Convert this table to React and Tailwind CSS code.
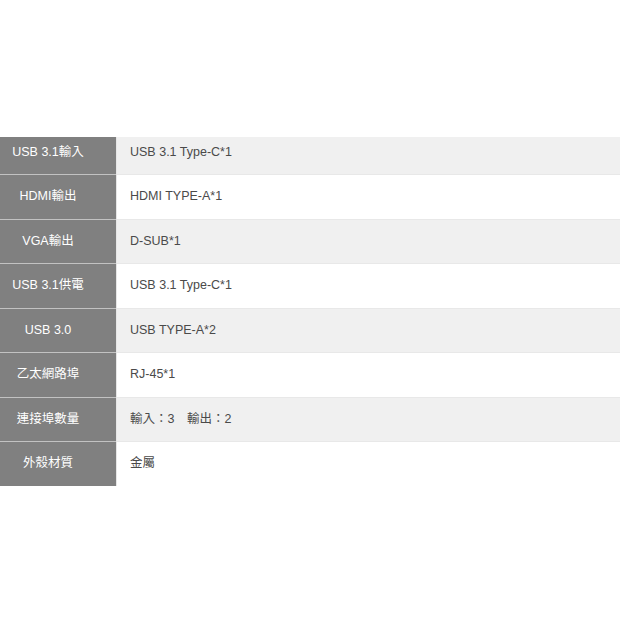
import React from 'react';

const rows = [
  ['USB 3.1輸入', 'USB 3.1 Type-C*1'],
  ['HDMI輸出', 'HDMI TYPE-A*1'],
  ['VGA輸出', 'D-SUB*1'],
  ['USB 3.1供電', 'USB 3.1 Type-C*1'],
  ['USB 3.0', 'USB TYPE-A*2'],
  ['乙太網路埠', 'RJ-45*1'],
  ['連接埠數量', '輸入：3　輸出：2'],
  ['外殼材質', '金屬'],
];

const App = () => {
  return (
    <div
      className="w-[620px] h-[620px] bg-white pt-[137px]"
      style={{ fontFamily: '"Liberation Sans", Arial, "Noto Sans CJK TC", sans-serif' }}
    >
      <div className="flex flex-col">
        {rows.map(([label, value], i) => (
          <div key={label} className={`flex ${i === 0 ? 'h-[37px]' : 'h-[44.5px]'}`}>
            <div
              className={`w-[116px] shrink-0 bg-[#808080] text-white text-[12.5px] flex items-center justify-center pr-[20px] ${
                i === 0 ? 'pb-[6px]' : 'border-t border-[#c2c2c2]'
              }`}
            >
              {label}
            </div>
            <div
              className={`flex-1 flex items-center pl-[13px] text-[12.5px] text-[#4a4a4a] border-l border-[#e6e6e6] ${
                i % 2 === 0 ? 'bg-[#f0f0f0]' : 'bg-white'
              } ${i === 0 ? 'pb-[6px]' : 'border-t border-t-[#e8e8e8]'}`}
            >
              {value}
            </div>
          </div>
        ))}
      </div>
    </div>
  );
};

export default App;
